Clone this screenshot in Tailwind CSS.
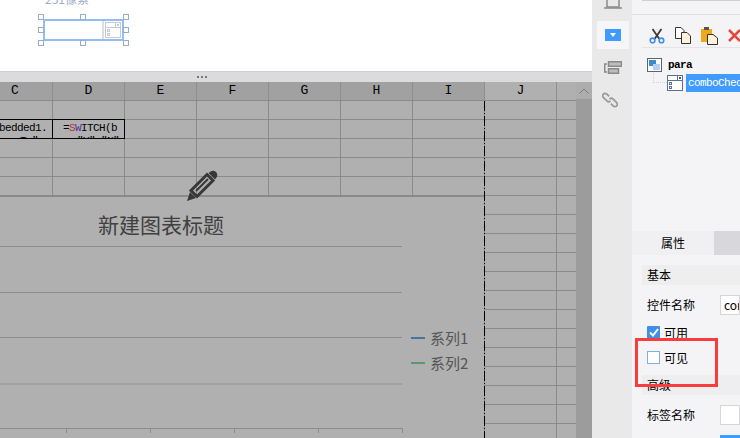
<!DOCTYPE html>
<html lang="zh">
<head>
  <meta charset="UTF-8" />
  <title>para</title>
  <script src="https://cdn.jsdelivr.net/npm/@tailwindcss/browser@4"></script>
</head>
<body class="relative w-[740px] h-[438px] overflow-hidden bg-white font-['Noto_Sans_CJK_SC',sans-serif]">

  <div class="flex h-[438px]">

    <!-- Left: canvas + sheet -->
    <div class="w-[592px] shrink-0 flex flex-col bg-[#b0b0b0]">

      <!-- Canvas -->
      <div class="relative h-[71px] bg-white overflow-hidden">
        <div class="absolute left-[45px] top-[-8px] text-[12px] leading-[14px] text-[#9db0c8]">251像素</div>
        <div class="absolute left-[43px] top-[19px] w-[81px] h-[22px] border-2 border-[#93bdf0] flex justify-end bg-white">
          <div class="w-[20px] border-l-2 border-[#dedede] flex items-center justify-center">
            <svg width="16" height="16" viewBox="0 0 16 16" fill="none" stroke="#c3cad8"><rect x="0.5" y="0.5" width="15" height="15"/><path d="M0.5 5.5H15.5M10.5 0.5V5.5"/><rect x="12" y="2" width="2" height="2" fill="#c3cad8" stroke="none"/><rect x="2.5" y="7.5" width="2" height="2"/><rect x="2.5" y="11.5" width="2" height="2"/></svg>
          </div>
        </div>
        <span class="absolute left-[38px] top-[14px] size-[6px] border border-[#93aecb] bg-white"></span>
        <span class="absolute left-[80px] top-[14px] size-[6px] border border-[#93aecb] bg-white"></span>
        <span class="absolute left-[123px] top-[14px] size-[6px] border border-[#93aecb] bg-white"></span>
        <span class="absolute left-[38px] top-[27px] size-[6px] border border-[#93aecb] bg-white"></span>
        <span class="absolute left-[123px] top-[27px] size-[6px] border border-[#93aecb] bg-white"></span>
        <span class="absolute left-[38px] top-[40px] size-[6px] border border-[#93aecb] bg-white"></span>
        <span class="absolute left-[80px] top-[40px] size-[6px] border border-[#93aecb] bg-white"></span>
        <span class="absolute left-[123px] top-[40px] size-[6px] border border-[#93aecb] bg-white"></span>
      </div>

      <!-- Splitter -->
      <div class="h-[11px] bg-[#dbdbdd] border-t border-[#d0d0d0] flex items-center pl-[197px] gap-[2px]">
        <span class="size-[2px] bg-[#777]"></span><span class="size-[2px] bg-[#777]"></span><span class="size-[2px] bg-[#777]"></span>
      </div>

      <!-- Sheet -->
      <div class="relative flex-1 overflow-hidden flex font-['Liberation_Mono',monospace]">
        <div class="w-[576px] shrink-0 overflow-hidden">
          <!-- Column header -->
          <div class="flex h-[19px] text-[13px] leading-[18px] text-black border-b border-[#8a8a8a]">
            <div class="w-[53px] shrink-0 bg-[#a1a1a1] border-r border-[#8e8e8e] text-center pr-[22px]">C</div>
            <div class="w-[72px] shrink-0 bg-[#a1a1a1] border-r border-[#8e8e8e] text-center">D</div>
            <div class="w-[72px] shrink-0 bg-[#a1a1a1] border-r border-[#8e8e8e] text-center">E</div>
            <div class="w-[72px] shrink-0 bg-[#a1a1a1] border-r border-[#8e8e8e] text-center">F</div>
            <div class="w-[72px] shrink-0 bg-[#a1a1a1] border-r border-[#8e8e8e] text-center">G</div>
            <div class="w-[72px] shrink-0 bg-[#a1a1a1] border-r border-[#8e8e8e] text-center">H</div>
            <div class="w-[72px] shrink-0 bg-[#a1a1a1] border-r border-[#8e8e8e] text-center">I</div>
            <div class="w-[72px] shrink-0 border-r border-[#8e8e8e] text-center">J</div>
          </div>
          <!-- Rows -->
          <div class="grid grid-cols-[53px_repeat(7,72px)_20px] auto-rows-[19px] w-[576px] [&>div]:border-r [&>div]:border-b [&>div]:border-[#8a8a8a]">
            <div></div><div></div><div></div><div></div><div></div><div></div><div></div><div></div><div></div>
            <div class="relative overflow-hidden !border-black !border-y !border-r mt-[-1px] h-[20px] text-[11px] leading-[13px] text-black whitespace-nowrap pt-[2px] tracking-[-0.6px]">
              <div class="ml-[-1px]">bedded1.</div><div class="ml-[8px]">; T "</div>
            </div>
            <div class="relative overflow-hidden !border-black !border-y !border-r mt-[-1px] h-[20px] text-[11px] leading-[13px] text-black whitespace-nowrap pt-[2px] pl-[10px] tracking-[-0.6px]">
              <div>=<span class="text-[#b03030]">S</span><span class="text-[#5030a0]">W</span>ITCH(b</div><div class="ml-[14px]">"Y" "N"</div>
            </div>
            <div></div><div></div><div></div><div></div><div></div><div></div>
            <div></div><div></div><div></div><div></div><div></div><div></div><div></div><div></div><div></div>
            <div></div><div></div><div></div><div></div><div></div><div></div><div></div><div></div><div></div>
            <div></div><div></div><div></div><div></div><div></div><div></div><div></div><div></div><div></div>
            <div></div><div></div><div></div><div></div><div></div><div></div><div></div><div></div><div></div>
            <div></div><div></div><div></div><div></div><div></div><div></div><div></div><div></div><div></div>
            <div></div><div></div><div></div><div></div><div></div><div></div><div></div><div></div><div></div>
            <div></div><div></div><div></div><div></div><div></div><div></div><div></div><div></div><div></div>
            <div></div><div></div><div></div><div></div><div></div><div></div><div></div><div></div><div></div>
            <div></div><div></div><div></div><div></div><div></div><div></div><div></div><div></div><div></div>
            <div></div><div></div><div></div><div></div><div></div><div></div><div></div><div></div><div></div>
            <div></div><div></div><div></div><div></div><div></div><div></div><div></div><div></div><div></div>
            <div></div><div></div><div></div><div></div><div></div><div></div><div></div><div></div><div></div>
            <div></div><div></div><div></div><div></div><div></div><div></div><div></div><div></div><div></div>
            <div></div><div></div><div></div><div></div><div></div><div></div><div></div><div></div><div></div>
            <div></div><div></div><div></div><div></div><div></div><div></div><div></div><div></div><div></div>
            <div></div><div></div><div></div><div></div><div></div><div></div><div></div><div></div><div></div>
          </div>
        </div>

        <!-- Scrollbar -->
        <div class="w-[16px] shrink-0 flex flex-col bg-[#9c9c9c]">
          <div class="h-[17px] bg-[#adadad] flex items-center justify-center">
            <svg width="10" height="6" viewBox="0 0 10 6" fill="none" stroke="#7c7c7c"><path d="M0.5 5.5L5 1L9.5 5.5"/></svg>
          </div>
        </div>

        <!-- Page break line -->
        <div class="absolute left-[484px] top-[19px] bottom-0 w-[1px] bg-[repeating-linear-gradient(to_bottom,#000_0,#000_10px,#8a8a8a_10px,#8a8a8a_12px,#000_12px,#000_13px,#8a8a8a_13px,#8a8a8a_15px)]"></div>

        <!-- Chart overlay -->
        <div class="absolute left-0 top-[114px] w-[484px] h-[250px] bg-[#b0b0b0] border-t border-[#8a8a8a] font-['Noto_Sans_CJK_SC',sans-serif]">
          <div class="absolute left-0 top-[49px] w-[402px] h-[1px] bg-[#8d8d8d]"></div>
          <div class="absolute left-0 top-[95px] w-[402px] h-[1px] bg-[#8d8d8d]"></div>
          <div class="absolute left-0 top-[140px] w-[402px] h-[1px] bg-[#8d8d8d]"></div>
          <div class="absolute left-0 top-[186px] w-[402px] h-[2px] bg-[#a0a0a0]"></div>
          <div class="absolute left-0 top-[231px] w-[402px] h-[1px] bg-[#8d8d8d]"></div>
          <div class="absolute left-[66px] top-[231px] w-[1px] h-[5px] bg-[#8d8d8d]"></div>
          <div class="absolute left-[150px] top-[231px] w-[1px] h-[5px] bg-[#8d8d8d]"></div>
          <div class="absolute left-[234px] top-[231px] w-[1px] h-[5px] bg-[#8d8d8d]"></div>
          <div class="absolute left-[318px] top-[231px] w-[1px] h-[5px] bg-[#8d8d8d]"></div>
          <div class="absolute left-[402px] top-[231px] w-[1px] h-[5px] bg-[#8d8d8d]"></div>
          <div class="absolute left-[98px] top-[12px] text-[21px] leading-[30px] text-[#404040] whitespace-nowrap">新建图表标题</div>
          <div class="absolute left-[411px] top-[131px] flex items-center gap-[5px] text-[15px] leading-[20px] text-[#555]"><span class="w-[14px] h-[2px] bg-[#45769f]"></span>系列1</div>
          <div class="absolute left-[411px] top-[156px] flex items-center gap-[5px] text-[15px] leading-[20px] text-[#555]"><span class="w-[14px] h-[2px] bg-[#569a68]"></span>系列2</div>
        </div>

        <!-- Pencil -->
        <svg class="absolute left-[186px] top-[88px]" width="32" height="32" viewBox="0 0 32 32" fill="#383838">
          <path d="M1 31L4 22L10 28Z"/>
          <path d="M5 20.5L21 4.5L27 10.5L11 26.5Z" fill="none" stroke="#383838" stroke-width="3"/>
          <path d="M10 21L22 9" stroke="#383838" stroke-width="2"/>
          <path d="M22.5 3L25 1.2C26.5 0.4 28.5 0.5 30 2C31.5 3.5 31.6 5.5 30.8 7L29 9.5Z"/>
        </svg>
      </div>
    </div>

    <!-- Icon rail -->
    <div class="w-[40px] shrink-0 bg-[#e9e9e9] flex flex-col items-center pl-[2px]">
      <svg class="mt-[-8px] shrink-0" width="18" height="19" viewBox="0 0 18 19" fill="none" stroke="#8a8a8a" stroke-width="1.5"><rect x="3" y="1" width="12" height="14"/><path d="M0 16H18"/></svg>
      <div class="mt-[10px] w-[32px] h-[28px] bg-[#f6f6f8] flex items-center justify-center">
        <div class="w-[16px] h-[12px] bg-[#3f9bff] flex items-center justify-center">
          <svg width="6" height="4" viewBox="0 0 6 4" fill="#fff"><path d="M0 0H6L3 4Z"/></svg>
        </div>
      </div>
      <svg class="mt-[12px] shrink-0" width="18" height="13" viewBox="0 0 18 13" fill="none" stroke="#8a8a8a" stroke-width="1.5"><path d="M3 3H0.750V11H3"/><rect x="4.500" y="0.750" width="13" height="4.500" fill="#bdbdbd"/><rect x="4.500" y="7.750" width="10" height="4.500" fill="#bdbdbd"/></svg>
      <svg class="mt-[18px] ml-[-6px] shrink-0" width="16" height="16" viewBox="0 0 18 18" fill="none" stroke="#9a9a9a" stroke-width="2"><path d="M8 5L5.5 2.5C4 1 2.5 1.5 1.5 2.5C0.5 3.5 0.5 5 2 6.5L5.5 10C7 11.5 8.5 11 9.5 10"/><path d="M10 13L12.500 15.500C14 17 15.500 16.500 16.500 15.500C17.500 14.500 17.500 13 16 11.500L12.500 8C11 6.500 9.500 7 8.500 8"/></svg>
    </div>

    <!-- Property panel -->
    <div class="w-[108px] shrink-0 bg-[#f4f4f6] flex flex-col overflow-hidden [&>div]:shrink-0">
      <div class="h-[1px] ml-[10px] bg-[#d0d0d0]"></div>
      <div class="h-[13px]"></div>
      <!-- Toolbar -->
      <div class="h-[33px] pt-[9px] border-t border-[#e0e0e0] flex items-center pl-[17px] gap-[10px] overflow-hidden">
        <svg class="shrink-0" width="16" height="16" viewBox="0 0 18 18" fill="none"><path d="M4 1L11.500 12M14 1L6.500 12" stroke="#3a3a3a" stroke-width="2"/><circle cx="4" cy="14" r="2.600" stroke="#3f8fe8" stroke-width="1.800"/><circle cx="14" cy="14" r="2.600" stroke="#3f8fe8" stroke-width="1.800"/></svg>
        <svg class="shrink-0" width="16" height="17" viewBox="0 0 16 17"><path d="M0.500 0.500H6L9 3.500V11.500H0.500Z" fill="#fff" stroke="#333"/><path d="M6.500 5.500H12L15.500 9V16.500H6.500Z" fill="#fdf3dc" stroke="#333"/></svg>
        <svg class="shrink-0" width="17" height="18" viewBox="0 0 17 18"><rect x="0" y="2" width="11" height="13" fill="#f0a818"/><rect x="3" y="0" width="5" height="3" fill="#555"/><path d="M6.500 7.500H12L16.500 11V17.500H6.500Z" fill="#fdf3dc" stroke="#333"/></svg>
        <svg class="shrink-0" width="13" height="13" viewBox="0 0 13 13" stroke="#e8453c" stroke-width="2.500"><path d="M1 1L12 12M12 1L1 12"/></svg>
      </div>
      <div class="h-[1px] ml-[10px] bg-[#e4e4e6]"></div>

      <!-- Tree -->
      <div class="relative pt-[9px] font-['Liberation_Mono',monospace] text-[11px] text-black">
        <div class="flex items-center h-[16px] pl-[15px] gap-[5px]">
          <svg class="shrink-0" width="16" height="15" viewBox="0 0 16 15"><rect x="0.500" y="0.500" width="14" height="13" fill="#fff" stroke="#5a6472"/><rect x="2" y="2" width="7" height="6" fill="#3c8ccc"/><rect x="6" y="6" width="7" height="6" fill="#b8d0f0"/></svg>
          <span class="tracking-[-0.6px] font-bold">para</span>
        </div>
        <div class="flex items-center h-[18px] mt-[1px] pl-[35px] gap-[3px] whitespace-nowrap">
          <svg class="shrink-0" width="16" height="16" viewBox="0 0 16 16" fill="none" stroke="#5a7096"><rect x="0.500" y="0.500" width="15" height="15" fill="#fff"/><path d="M0.500 5.500H15.500M10.500 0.500V5.500"/><rect x="12" y="2" width="2" height="2" fill="#3a5a96" stroke="none"/><rect x="2.500" y="7.500" width="2" height="2"/><rect x="2.500" y="11.500" width="2" height="2"/></svg>
          <span class="flex-1 h-[18px] bg-[#3f9bff] text-white pl-[2px] tracking-[-0.6px] leading-[18px]">comboChec</span>
        </div>
        <div class="absolute left-[21px] top-[25px] w-[14px] h-[10px] border-l border-b border-dotted border-[#d4d4d8]"></div>
      </div>

      <div class="h-[139px]"></div>

      <!-- Tabs -->
      <div class="flex h-[24px] text-[12px] leading-[24px] text-black">
        <div class="w-[82px] bg-[#f0f0f2] text-center">属性</div>
        <div class="flex-1 bg-[#d8d8dc]"></div>
      </div>

      <!-- Form -->
      <div class="pl-[10px] pt-[10px] text-[12px] text-black">
        <div class="h-[20px] bg-[#eeeeef] pl-[5px] leading-[20px]">基本</div>
        <div class="flex items-center h-[20px] mt-[10px] pl-[5px]">
          <span class="w-[73px] shrink-0">控件名称</span>
          <span class="flex-1 h-[20px] bg-white border border-[#d6d6d6] pl-[3px] leading-[18px] overflow-hidden">com</span>
        </div>
        <div class="flex items-center h-[13px] mt-[11px] pl-[5px] gap-[4px]">
          <span class="size-[13px] rounded-[1px] bg-[#3f8fe8] flex items-center justify-center">
            <svg width="10" height="9" viewBox="0 0 10 9" fill="none" stroke="#fff" stroke-width="2"><path d="M1 4.500L4 7.500L9 1"/></svg>
          </span>
          <span class="leading-[13px]">可用</span>
        </div>
        <div class="flex items-center h-[13px] mt-[12px] pl-[5px] gap-[4px]">
          <span class="size-[13px] bg-white border border-[#7fb0e8]"></span>
          <span class="leading-[13px]">可见</span>
        </div>
        <div class="h-[20px] bg-[#eeeeef] pl-[5px] leading-[20px] mt-[11px]">高级</div>
        <div class="flex items-center h-[20px] mt-[10px] pl-[5px]">
          <span class="w-[73px] shrink-0">标签名称</span>
          <span class="flex-1 h-[20px] bg-white border border-[#d6d6d6]"></span>
        </div>
        <div class="flex items-center h-[20px] mt-[10px] pl-[5px]">
          <span class="w-[73px] shrink-0">控件值</span>
          <span class="flex-1 h-[20px] bg-[#3f9bff]"></span>
        </div>
      </div>
    </div>
  </div>

  <!-- Red highlight -->
  <div class="absolute left-[635px] top-[338px] w-[83px] h-[49px] border-[3px] border-[#f93c3c]"></div>
</body>
</html>
